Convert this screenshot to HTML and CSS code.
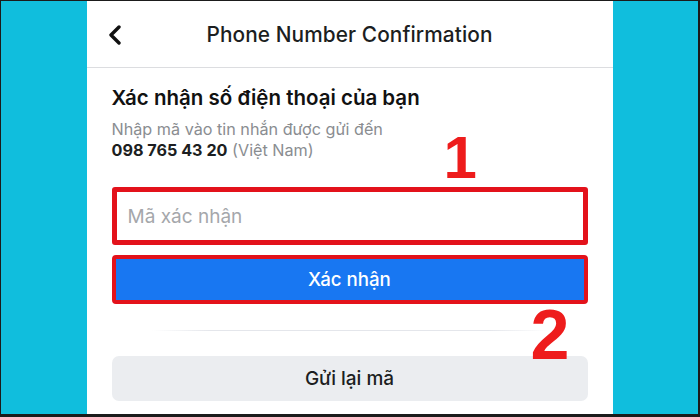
FILE: index.html
```html
<!DOCTYPE html>
<html lang="vi">
<head>
<meta charset="utf-8">
<title>Phone Number Confirmation</title>
<link rel="stylesheet" href="styles.css">
</head>
<body>
<div class="frame">
  <div class="side"></div>
  <main class="panel">
    <header class="topbar">
      <span class="back" aria-label="Back">
        <svg width="16" height="20" viewBox="0 0 16 20"><path d="M12 2 L4 10 L12 18" fill="none" stroke="#111" stroke-width="3.4" stroke-linecap="round" stroke-linejoin="round"/></svg>
      </span>
      <h1 class="title">Phone Number Confirmation</h1>
    </header>
    <section class="content">
      <h2 class="heading">Xác nhận số điện thoại của bạn</h2>
      <p class="sub">Nhập mã vào tin nhắn được gửi đến<br><b class="phone">098 765 43 20</b> (Việt Nam)</p>
      <div class="input">Mã xác nhận</div>
      <button class="confirm">Xác nhận</button>
      <div class="divider"></div>
      <button class="resend">Gửi lại mã</button>
    </section>
    <span class="mark mark-1">1</span>
    <span class="mark mark-2">2</span>
  </main>
  <div class="side"></div>
</div>
</body>
</html>
```
FILE: styles.css
```css
html, body {
  margin: 0;
  padding: 0;
  background: #1b1b1b;
}
.frame {
  box-sizing: border-box;
  width: 700px;
  height: 417px;
  display: flex;
  border-top: 1px solid #1b1b1b;
  border-left: 1px solid #1b1b1b;
  border-right: 2px solid #1b1b1b;
  border-bottom: 3px solid #1b1b1b;
  overflow: hidden;
}
.side {
  flex: 1;
  background: #10bedd;
}
.panel {
  position: relative;
  width: 526px;
  flex: none;
  background: #fff;
  font-family: Inter, "Liberation Sans", sans-serif;
  color: #1c1e21;
}
.topbar {
  height: 66px;
  border-bottom: 1px solid #dcdde0;
  display: flex;
  align-items: center;
  justify-content: center;
  position: relative;
}
.back {
  position: absolute;
  left: 20px;
  top: 24px;
  display: flex;
}
.title {
  margin: 0;
  font-size: 20.8px;
  font-weight: 500;
  letter-spacing: 0.1px;
  color: #1c1e21;
}
.content {
  padding: 17px 25px 0;
}
.heading {
  margin: 0;
  font-size: 20.5px;
  line-height: 26px;
  font-weight: 600;
  color: #111;
}
.sub {
  margin: 8px 0 0;
  font-size: 16.2px;
  line-height: 21px;
  color: #8a8d91;
}
.phone {
  color: #1c1e21;
  font-weight: 700;
}
.input {
  margin-top: 26px;
  height: 48px;
  border: 5px solid #e3121b;
  border-radius: 3px;
  display: flex;
  align-items: center;
  padding-left: 11px;
  font-size: 19px;
  color: #a5a7ab;
}
.confirm {
  display: block;
  width: 100%;
  margin-top: 10px;
  height: 49px;
  background: #1877f2;
  border: 4px solid #e3121b;
  border-radius: 4px;
  color: #fff;
  font-family: inherit;
  font-size: 18.7px;
  font-weight: 500;
}
.divider {
  margin: 26px 40px 0;
  height: 1px;
  background: linear-gradient(90deg, rgba(228,230,235,0), #e4e6eb 15%, #e4e6eb 85%, rgba(228,230,235,0));
}
.resend {
  display: block;
  width: 100%;
  margin-top: 25px;
  height: 45px;
  background: #ebedf0;
  border: 0;
  border-radius: 7px;
  color: #1c1e21;
  font-family: inherit;
  font-size: 19px;
  font-weight: 500;
}
.mark {
  position: absolute;
  font-family: "Liberation Sans", Arial, sans-serif;
  font-weight: 700;
  color: #ee1c1c;
  line-height: 1;
}
.mark-1 {
  left: 357px;
  top: 127px;
  font-size: 60px;
}
.mark-2 {
  left: 444px;
  top: 299px;
  font-size: 70px;
}
```
